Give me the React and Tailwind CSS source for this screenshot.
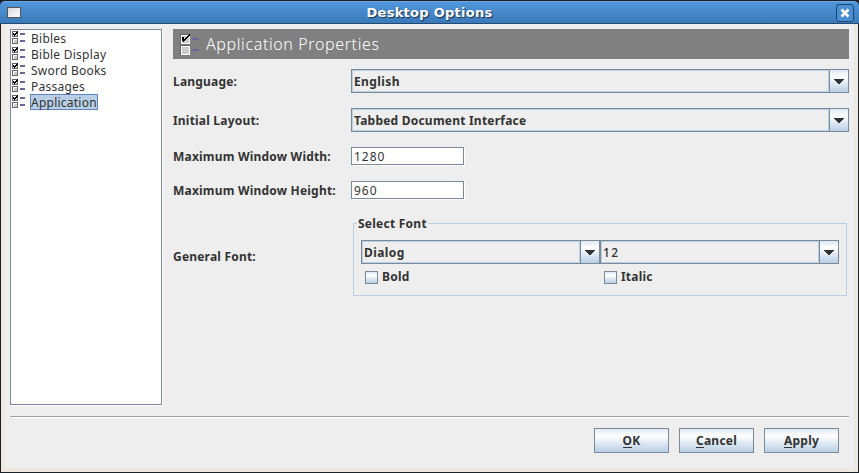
import React from "react";

const labelCls = "font-bold text-[12px] leading-4 text-[#333333] whitespace-nowrap";

function TreeIcon() {
  return (
    <svg width="19" height="16" viewBox="0 0 19 16" shapeRendering="crispEdges" className="shrink-0">
      {[1, 8].map((y) => (
        <g key={y}>
          <rect x="1" y={y} width="6" height="6" fill="#666" />
          <rect x="2" y={y + 1} width="4" height="4" fill="#fff" />
          <rect x="3" y={y + 2} width="3" height="3" fill="#ccc" />
          <rect x="9" y={y + 2} width="5" height="2" fill="#666699" />
        </g>
      ))}
      <path d="M2 3h1v1h1v-1h1v-1h1v-1h1v2h-1v1h-1v1h-1v1h-1v-1h-1z" fill="#000" />
    </svg>
  );
}

function HeaderIcon() {
  return (
    <svg width="20" height="22" viewBox="0 0 20 22" shapeRendering="crispEdges" className="shrink-0">
      {[2, 13].map((y) => (
        <g key={y}>
          <rect x="0" y={y - 1} width="10" height="10" fill="#666" />
          <rect x="1" y={y} width="9" height="9" fill="#fff" />
          <rect x="2" y={y + 1} width="7" height="7" fill="#ccc" />
          <rect x="12" y={y + 3} width="7" height="2" fill="#666699" />
        </g>
      ))}
      <path d="M3 4h1v2h1v-1h1v-1h1v-1h1v-1h1v-1h1v2h-1v1h-1v1h-1v1h-1v1h-1v1h-1v1h-1v-1h-1v-4z" fill="#000" />
    </svg>
  );
}

function Combo({ children, className, text = "font-bold tracking-[0.22px]" }) {
  return (
    <div className={"flex h-6 border border-[#7a8a99] " + className}>
      <div className="flex grow items-center border border-[#b8cfe5] pt-[2px] pl-px">
        <span className={"text-[12px] leading-4 whitespace-nowrap text-[#333] " + text}>{children}</span>
      </div>
      <div className="flex w-[19px] items-center justify-center border-l border-[#7a8a99] bg-linear-to-b from-[#dde8f3] via-white via-30% to-[#b8cfe5]">
        <svg width="10" height="5" viewBox="0 0 10 5" shapeRendering="crispEdges">
          <path d="M0 0h10v1h-1v1h-1v1h-1v1h-1v1h-2v-1h-1v-1h-1v-1h-1v-1h-1z" fill="#333" />
        </svg>
      </div>
    </div>
  );
}

function Field({ children }) {
  return (
    <div className="flex h-[18px] w-[113px] items-center border border-[#7a8a99] bg-white pt-[2px] pl-[2px] text-[12px] leading-4 tracking-[1px] text-[#333] shadow-[1px_1px_0_#fff]">
      {children}
    </div>
  );
}

function Check({ children }) {
  return (
    <div className="flex items-center gap-[4px]">
      <div className="size-[13px] border border-[#7a8a99] bg-linear-to-b from-[#dde8f3] via-white via-30% to-[#b8cfe5]" />
      <span className={labelCls + " tracking-[0.2px]"}>{children}</span>
    </div>
  );
}

function Label({ children, className = "w-[178px]" }) {
  return <span className={labelCls + " pt-[2px] tracking-[0.2px] " + className}>{children}</span>;
}

function Button({ first, rest }) {
  return (
    <button className={"flex h-[25px] w-[75px] items-center justify-center border border-[#7a8a99] bg-linear-to-b from-[#dde8f3] via-white via-30% to-[#b8cfe5] tracking-[0.25px] " + labelCls}>
      <span className="border-b border-[#333] leading-[13px]">{first}</span>
      <span className="border-b border-transparent leading-[13px]">{rest}</span>
    </button>
  );
}

const items = ["Bibles", "Bible Display", "Sword Books", "Passages", "Application"];

export default function App() {
  return (
    <div className="flex h-[473px] w-[859px] flex-col overflow-hidden bg-[#1c2128] font-['Noto_Sans','Open_Sans',sans-serif]">
      <div className="mt-px flex h-[23px] shrink-0 items-center rounded-t-[5px] border-t border-b border-t-[#6fa8e4] border-b-[#234a73] bg-linear-to-b from-[#5096dc] to-[#3b7ab8] pr-[5px] pl-[7px]">
        <div className="h-[11px] w-[14px] border border-[#555] bg-linear-to-br from-[#d8d8d8] to-white" />
        <div className="grow pl-[2px] text-center font-['DejaVu_Sans'] text-[13px] leading-5 font-bold tracking-[0.27px] text-white [text-shadow:1px_1px_1px_#17304d]">
          Desktop Options
        </div>
        <div className="flex size-[18px] items-center justify-center rounded-[3px] border border-[#1f466f] bg-[#4a8fd3]">
          <svg width="10" height="10" viewBox="0 0 10 10">
            <path d="M1.5 1.5l7 7M8.5 1.5l-7 7" stroke="#fff" strokeWidth="2.6" />
          </svg>
        </div>
      </div>
      <div className="mx-px mb-px flex h-[448px] flex-col border-x-[4px] border-b-[4px] border-[#ece8e0] bg-[#eeeeee] pt-[5px] pr-[5px] pl-[5px]">
        <div className="flex gap-[11px]">
          <div className="flex h-[376px] w-[152px] shrink-0 flex-col border border-[#7a8a99] bg-white shadow-[1px_1px_0_#fff]">
            {items.map((name) => (
              <div key={name} className="flex h-4 shrink-0 items-start">
                <TreeIcon />
                <span className={(name === "Application" ? "border-[#6382bf] bg-[#b8cfe5] " : "border-transparent ") + "flex h-4 items-center border pt-[2px] text-[12px] leading-[14px] tracking-[0.24px] whitespace-nowrap text-[#333]"}>
                  {name}
                </span>
              </div>
            ))}
          </div>
          <div className="flex w-[676px] flex-col">
            <div className="flex h-[30px] items-center bg-[#808080] pl-[7px]">
              <HeaderIcon />
              <span className="ml-[6px] text-[16px] font-light tracking-[0.62px] text-white">Application Properties</span>
            </div>
            <div className="mt-[10px] flex h-6 items-center">
              <Label>Language:</Label>
              <Combo className="w-[498px]" text="font-bold tracking-[0.4px]">English</Combo>
            </div>
            <div className="mt-[15px] flex h-6 items-center">
              <Label>Initial Layout:</Label>
              <Combo className="w-[498px]">Tabbed Document Interface</Combo>
            </div>
            <div className="mt-[15px] flex h-[18px] items-center">
              <Label>Maximum Window Width:</Label>
              <Field>1280</Field>
            </div>
            <div className="mt-[16px] flex h-[18px] items-center">
              <Label>Maximum Window Height:</Label>
              <Field>960</Field>
            </div>
            <div className="mt-[17px] flex h-[80px] items-center">
              <Label className="w-[180px]">General Font:</Label>
              <fieldset className="h-[80px] w-[494px] border border-[#b8cfe5] pl-[7px]">
                <legend className="-ml-[4px] px-px text-[12px] leading-[15px] font-bold tracking-[0.25px] whitespace-nowrap text-[#333]">Select Font</legend>
                <div className="mt-[9px] flex">
                  <Combo className="w-[239px]" text="font-bold tracking-[0.4px]">Dialog</Combo>
                  <Combo className="w-[239px]" text="font-medium tracking-[1.4px]">12</Combo>
                </div>
                <div className="mt-[5px] flex pl-[4px]">
                  <div className="w-[239px]"><Check>Bold</Check></div>
                  <Check>Italic</Check>
                </div>
              </fieldset>
            </div>
          </div>
        </div>
        <div className="mt-[11px] h-[2px] w-[839px] border-t border-b border-t-[#a0a0a0] border-b-white" />
        <div className="mt-[10px] flex justify-end gap-[10px] pr-[10px]">
          <Button first="O" rest="K" />
          <Button first="C" rest="ancel" />
          <Button first="A" rest="pply" />
        </div>
      </div>
    </div>
  );
}
